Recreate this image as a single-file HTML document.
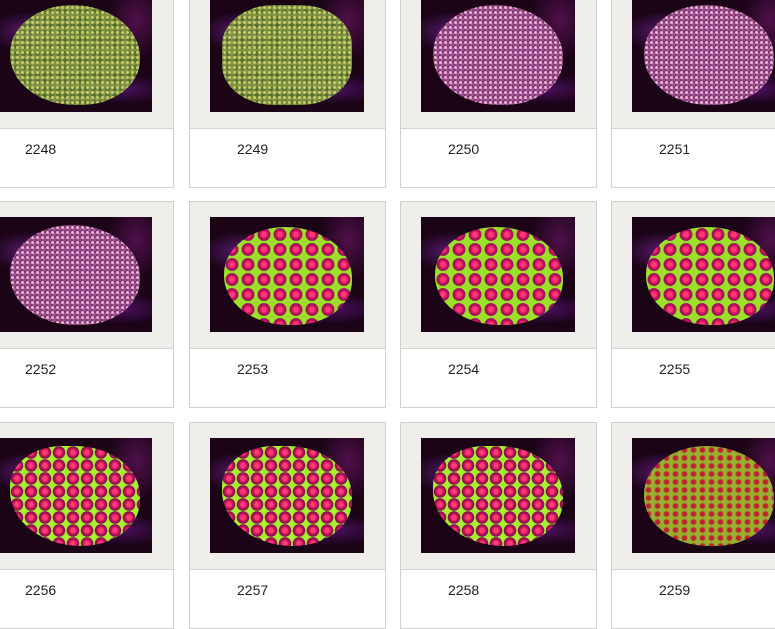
<!DOCTYPE html>
<html><head><meta charset="utf-8"><style>
body{margin:0;width:775px;height:610px;overflow:hidden;background:#fff;position:relative;font-family:"Liberation Sans",sans-serif}
.c{position:absolute;width:195px;height:205px;border:1px solid #d0d0cc;background:#fff}
.g{position:absolute;left:0;top:0;width:195px;height:146px;background:#efeeea;border-bottom:1px solid #d4d4d0}
.im{position:absolute;left:20px;top:15px;width:154px;height:115px;background:#1a0416;overflow:hidden}
.im:before{content:"";position:absolute;inset:0;background:radial-gradient(ellipse 40px 20px at 20% 30%,#5a1a70,transparent),radial-gradient(ellipse 50px 15px at 80% 80%,#4a1060,transparent),radial-gradient(ellipse 30px 40px at 90% 20%,#50104a,transparent)}
.b{position:absolute;left:12px;top:8px;width:130px;height:100px;border-radius:48% 52% 45% 50%}
.gr .b{background:radial-gradient(circle,#d8e070 1.2px,transparent 2px) 0 0/5px 5px,radial-gradient(circle,#5a7a30 2px,transparent 3px) 3px 3px/7px 7px,#8aa048;opacity:.9}
.pk .b{background:radial-gradient(circle,#f0b0d8 1.2px,transparent 2px) 0 0/5px 5px,radial-gradient(circle,#a05090 1.5px,transparent 2px) 2px 2px/5px 5px,#6a2a60}
.sp .b{background:radial-gradient(circle,#ff3a7a 2px,#d01058 4px,#8a1060 6px,transparent 6.8px) 0 0/16px 15px,#9ce02a;left:14px;top:10px;width:128px;height:98px}
.sp2 .b{background:radial-gradient(circle,#ff3a7a 2px,#c01050 4px,#7a1058 6px,transparent 6.5px) 0 0/14px 13px,#a6f030;border-radius:40% 50% 45% 55%}
.rd .b{background:radial-gradient(circle,#c02030 2px,transparent 3.5px) 0 0/9px 8px,#98b030}
.t{position:absolute;left:47px;top:159px;font-size:14px;color:#222}
</style></head><body>
<div class="c" style="left:-23px;top:-19px"><div class="g"><div class="im gr"><div class="b"></div></div></div><div class="t">2248</div></div>
<div class="c" style="left:189px;top:-19px"><div class="g"><div class="im gr"><div class="b" style="border-radius:40%"></div></div></div><div class="t">2249</div></div>
<div class="c" style="left:400px;top:-19px"><div class="g"><div class="im pk"><div class="b"></div></div></div><div class="t">2250</div></div>
<div class="c" style="left:611px;top:-19px"><div class="g"><div class="im pk"><div class="b"></div></div></div><div class="t">2251</div></div>

<div class="c" style="left:-23px;top:201px"><div class="g"><div class="im pk"><div class="b"></div></div></div><div class="t">2252</div></div>
<div class="c" style="left:189px;top:201px"><div class="g"><div class="im sp"><div class="b"></div></div></div><div class="t">2253</div></div>
<div class="c" style="left:400px;top:201px"><div class="g"><div class="im sp"><div class="b"></div></div></div><div class="t">2254</div></div>
<div class="c" style="left:611px;top:201px"><div class="g"><div class="im sp"><div class="b"></div></div></div><div class="t">2255</div></div>

<div class="c" style="left:-23px;top:422px"><div class="g"><div class="im sp2"><div class="b"></div></div></div><div class="t">2256</div></div>
<div class="c" style="left:189px;top:422px"><div class="g"><div class="im sp2"><div class="b"></div></div></div><div class="t">2257</div></div>
<div class="c" style="left:400px;top:422px"><div class="g"><div class="im sp2"><div class="b"></div></div></div><div class="t">2258</div></div>
<div class="c" style="left:611px;top:422px"><div class="g"><div class="im rd"><div class="b"></div></div></div><div class="t">2259</div></div>
</body></html>
